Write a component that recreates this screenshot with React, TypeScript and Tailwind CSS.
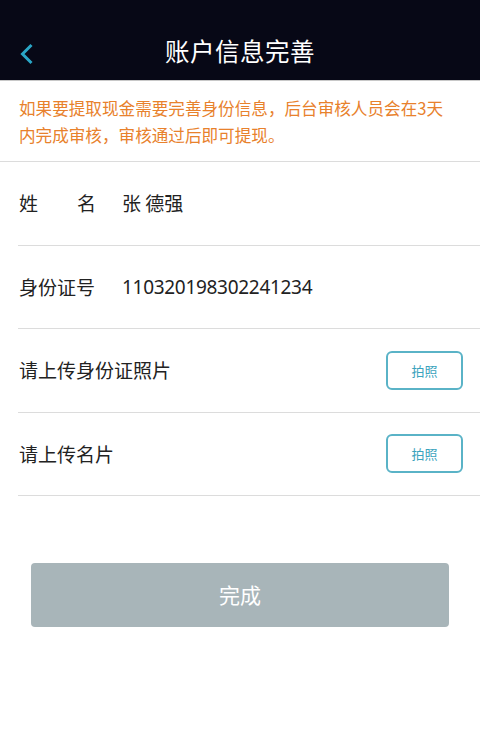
import React from "react";

const font = { fontFamily: '"Noto Sans CJK SC", "Noto Sans", sans-serif' };

function Row({ children, right }: { children: React.ReactNode; right?: React.ReactNode }) {
  return (
    <div className="ml-[18px] h-[83.5px] border-b-[1.5px] border-[#dcdcdc] flex items-center justify-between pr-[17px]">
      <div className="flex items-center text-[19px] text-[#222] pl-px">{children}</div>
      {right}
    </div>
  );
}

function PhotoBtn() {
  return (
    <button className="w-[77px] h-[39px] rounded-[6px] border-2 border-[#5ab3c7] text-[#3aa3bd] text-[13px] bg-white flex items-center justify-center">
      拍照
    </button>
  );
}

export default function App() {
  return (
    <div className="w-[480px] h-[755px] bg-white flex flex-col" style={font}>
      <div className="h-[81px] bg-[#070816] relative flex items-center justify-center pt-[22px] border-b border-[#c8c8c8]">
        <svg className="absolute left-[19px] top-[43px]" width="15" height="22" viewBox="0 0 15 22">
          <path d="M12.5 2 L3.5 11 L12.5 20" fill="none" stroke="#2aa6c6" strokeWidth="3" />
        </svg>
        <span className="text-white text-[24.5px] tracking-[0.5px]">账户信息完善</span>
      </div>
      <div className="px-[19px] pt-[14px] pb-[12px] text-[16.6px] leading-[27px] text-[#e8812c] border-b-[1.5px] border-[#dcdcdc]">
        <div>如果要提取现金需要完善身份信息，后台审核人员会在3天</div>
        <div>内完成审核，审核通过后即可提现。</div>
      </div>
      <Row>
        <span className="w-[103px] flex justify-between pr-[26px]"><span>姓</span><span>名</span></span>
        <span>张 德强</span>
      </Row>
      <Row>
        <span className="w-[103px]">身份证号</span>
        <span style={{ fontFamily: '"Noto Sans", sans-serif' }} className="tracking-[-0.3px]">110320198302241234</span>
      </Row>
      <Row right={<PhotoBtn />}>
        <span>请上传身份证照片</span>
      </Row>
      <Row right={<PhotoBtn />}>
        <span>请上传名片</span>
      </Row>
      <div className="px-[31px] mt-[67px]">
        <button className="w-full h-[64px] rounded-[4px] bg-[#a8b5b9] text-white text-[21px]">完成</button>
      </div>
    </div>
  );
}
